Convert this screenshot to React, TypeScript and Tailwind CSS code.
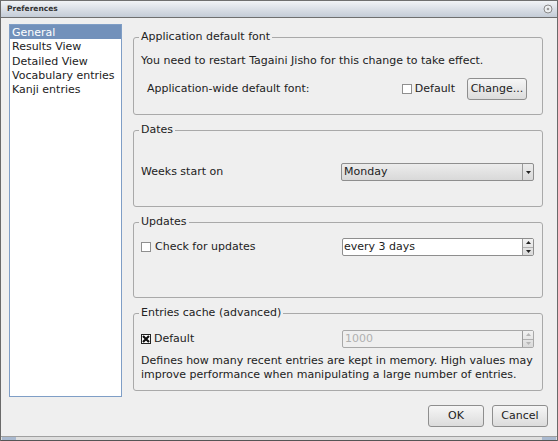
import React from 'react';

const pages = ['General', 'Results View', 'Detailed View', 'Vocabulary entries', 'Kanji entries'];

function Check({ checked = false }: { checked?: boolean }) {
  return (
    <span
      className={`inline-flex w-[10px] h-[10px] shrink-0 items-center justify-center border bg-white ${
        checked ? 'border-[#222]' : 'border-[#8f8f8f]'
      }`}
    >
      {checked && (
        <svg width="8" height="8" viewBox="0 0 8 8">
          <path d="M1 1L7 7M7 1L1 7" stroke="#111" strokeWidth="2.2" />
        </svg>
      )}
    </span>
  );
}

function Group({ title, className, children }: { title: string; className: string; children: React.ReactNode }) {
  return (
    <fieldset className={`border border-[#a9a9a9] rounded-[3px] px-[7px] ${className}`}>
      <legend className="ml-[-2px] px-[2px] leading-[12px]">{title}</legend>
      {children}
    </fieldset>
  );
}

function SpinArrows({ disabled = false }: { disabled?: boolean }) {
  const c = disabled ? '#b5b5b5' : '#222';
  return (
    <div className="flex flex-col w-[11px] h-full border-l border-[#9a9a9a] bg-linear-to-b from-[#f2f2f2] to-[#dadada]">
      <div className="flex-1 flex items-center justify-center border-b border-[#b0b0b0]">
        <svg width="5" height="3" viewBox="0 0 5 3"><path d="M0 3L2.5 0L5 3Z" fill={c} /></svg>
      </div>
      <div className="flex-1 flex items-center justify-center">
        <svg width="5" height="3" viewBox="0 0 5 3"><path d="M0 0L2.5 3L5 0Z" fill={c} /></svg>
      </div>
    </div>
  );
}

function Button({ label, className = '' }: { label: string; className?: string }) {
  return (
    <div
      className={`flex items-center justify-center h-[22px] border border-[#8e8e8e] rounded-[3px] bg-linear-to-b from-[#f6f6f6] to-[#dcdcdc] text-[#222] ${className}`}
    >
      {label}
    </div>
  );
}

export default function App() {
  return (
    <div className="w-[558px] h-[441px] flex flex-col bg-[#efefef] border-l border-r border-[#6a6a6a] font-['DejaVu_Sans',sans-serif] text-[11px] text-[#222] overflow-hidden">
      {/* title bar */}
      <div className="h-[18px] shrink-0 flex items-center justify-between pl-[6px] pr-[4px] border-t border-b border-[#6f6f6f] bg-linear-to-b from-[#f1f3f6] to-[#c4ccd7]">
        <span className="text-[7.5px] font-bold text-[#333] leading-none">Preferences</span>
        <svg width="10" height="10" viewBox="0 0 10 10">
          <circle cx="5" cy="5" r="4" fill="#eef0f2" stroke="#8a8a8a" />
          <circle cx="5" cy="5" r="1.3" fill="#9a9a9a" />
        </svg>
      </div>

      <div className="flex-1 flex flex-col pl-[8px] pr-[9px] pt-[6px]">
        <div className="flex h-[373px]">
          {/* page list */}
          <div className="w-[113px] shrink-0 border border-[#7f9ec6] bg-white">
            {pages.map((p, i) => (
              <div
                key={p}
                className={`h-[14.25px] leading-[16px] pl-[2px] whitespace-nowrap ${i === 0 ? 'bg-[#7291bb] text-white' : ''}`}
              >
                {p}
              </div>
            ))}
          </div>

          {/* settings page */}
          <div className="ml-[11px] w-[410px] flex flex-col gap-[9px] pt-[7px]">
            <Group title="Application default font" className="h-[84px]">
              <div className="mt-[11px] leading-[13px]">You need to restart Tagaini Jisho for this change to take effect.</div>
              <div className="mt-[11px] flex items-center pl-[6px] pr-[8px]">
                <span className="flex-1">Application-wide default font:</span>
                <Check />
                <span className="ml-[3px]">Default</span>
                <Button label="Change..." className="ml-[12px] w-[60px]" />
              </div>
            </Group>

            <Group title="Dates" className="h-[83px]">
              <div className="mt-[27px] flex items-center justify-between pr-[1px]">
                <span>Weeks start on</span>
                <div className="w-[193px] h-[18px] flex border border-[#8e8e8e] rounded-[2px] bg-linear-to-b from-[#ececec] to-[#d9d9d9]">
                  <span className="flex-1 pl-[2px] leading-[16px]">Monday</span>
                  <div className="w-[11px] flex items-center justify-center border-l border-[#9a9a9a]">
                    <svg width="5" height="3" viewBox="0 0 5 3"><path d="M0 0L2.5 3L5 0Z" fill="#222" /></svg>
                  </div>
                </div>
              </div>
            </Group>

            <Group title="Updates" className="h-[82px]">
              <div className="mt-[10px] flex items-center justify-between pr-[1px]">
                <div className="flex items-center">
                  <Check />
                  <span className="ml-[4px]">Check for updates</span>
                </div>
                <div className="w-[192px] h-[18px] flex border border-[#8e8e8e] rounded-[2px] bg-white">
                  <span className="flex-1 pl-[1px] leading-[16px]">every 3 days</span>
                  <SpinArrows />
                </div>
              </div>
            </Group>

            <Group title="Entries cache (advanced)" className="h-[84px]">
              <div className="mt-[11px] flex items-center justify-between pr-[1px]">
                <div className="flex items-center">
                  <Check checked />
                  <span className="ml-[3px]">Default</span>
                </div>
                <div className="w-[192px] h-[18px] flex border border-[#a8a8a8] rounded-[2px] bg-[#efefef]">
                  <span className="flex-1 pl-[2px] leading-[16px] text-[#b0b0b0]">1000</span>
                  <SpinArrows disabled />
                </div>
              </div>
              <div className="mt-[6px] leading-[13.5px]">
                Defines how many recent entries are kept in memory. High values may improve performance when
                manipulating a large number of entries.
              </div>
            </Group>
          </div>
        </div>

        <div className="mt-[8px] flex justify-end gap-[8px]">
          <Button label="OK" className="w-[56px]" />
          <Button label="Cancel" className="w-[56px]" />
        </div>
      </div>

      {/* bottom frame */}
      <div className="h-[5px] shrink-0 flex justify-between border-t border-[#a0a0a0] border-b border-b-[#555] bg-[#dedede]">
        <div className="w-[14px] ml-[1px] bg-[#a9b9cf]" />
        <div className="w-[14px] mr-[1px] bg-[#a9b9cf]" />
      </div>
    </div>
  );
}
